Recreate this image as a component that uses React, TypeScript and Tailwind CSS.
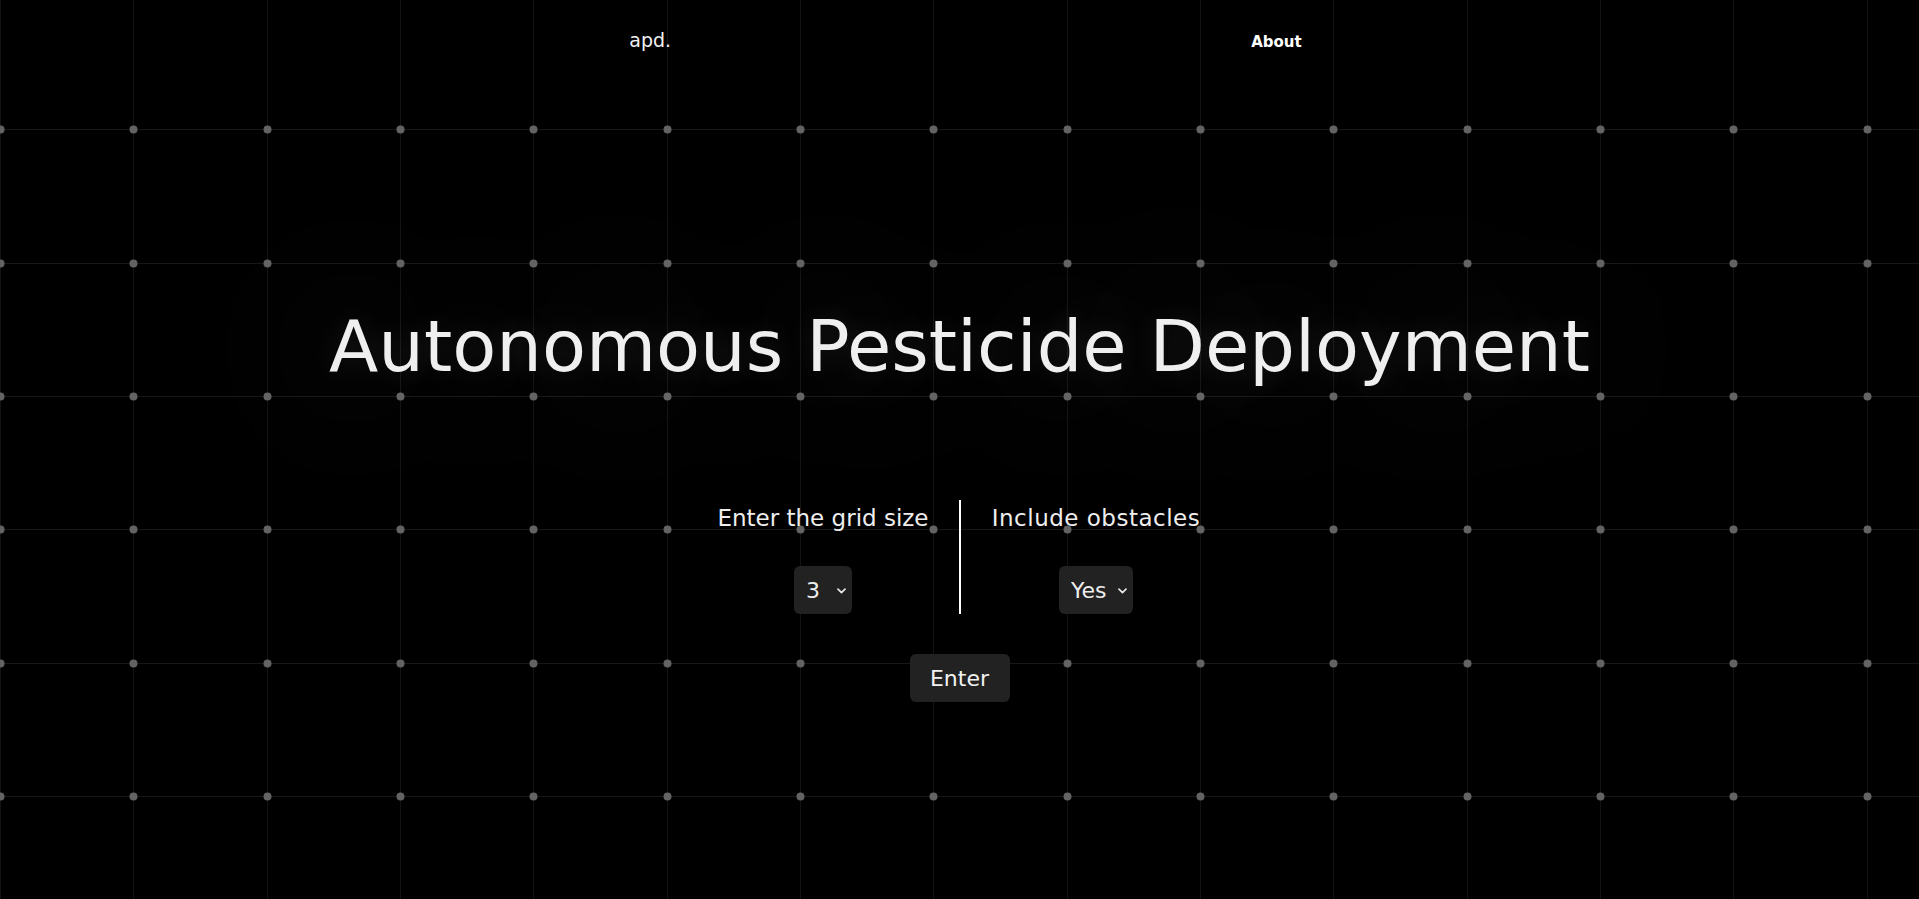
import React from "react";

const STEP = 400 / 3;
const COLS = Array.from({ length: 15 }, (_, i) => i);
const ROWS = Array.from({ length: 7 }, (_, i) => i + 1);

function GridBackground() {
  return (
    <svg
      className="pointer-events-none absolute inset-0 h-full w-full"
      width="1919"
      height="899"
      aria-hidden="true"
    >
      {COLS.map((i) => {
        const x = Math.round(i * STEP) + 0.5;
        return <line key={"v" + i} x1={x} y1={0} x2={x} y2={2000} stroke="#131313" strokeWidth={1} />;
      })}
      {ROWS.map((j) => {
        const y = Math.round(-4 + j * STEP) + 0.5;
        return <line key={"h" + j} x1={0} y1={y} x2={4000} y2={y} stroke="#181818" strokeWidth={1} />;
      })}
      {ROWS.map((j) =>
        COLS.map((i) => (
          <circle
            key={"d" + i + "-" + j}
            cx={Math.round(i * STEP) + 0.5}
            cy={Math.round(-4 + j * STEP) + 0.5}
            r={4}
            fill="#636363"
          />
        ))
      )}
    </svg>
  );
}

function Chevron() {
  return (
    <svg
      className="pointer-events-none absolute right-[6px] top-[22px]"
      width="9"
      height="6"
      viewBox="0 0 9 6"
      aria-hidden="true"
    >
      <path d="M1 1.2 L4.5 4.6 L8 1.2" fill="none" stroke="#e6e6e6" strokeWidth="1.7" strokeLinecap="round" strokeLinejoin="round" />
    </svg>
  );
}

function Select({ width, value, options }: { width: string; value: string; options: string[] }) {
  return (
    <div className={"relative mt-[32px] h-[48px] " + width}>
      <select
        defaultValue={value}
        className="h-full w-full cursor-pointer appearance-none rounded-md bg-[#222222] pl-3 text-[22px] text-[#eeeeee] outline-none"
      >
        {options.map((o) => (
          <option key={o} value={o} className="bg-[#222222]">
            {o}
          </option>
        ))}
      </select>
      <Chevron />
    </div>
  );
}

export default function App() {
  return (
    <div className="relative min-h-screen w-full overflow-hidden bg-black font-['DejaVu_Sans',sans-serif] text-[#eeeeee]">
      <GridBackground />
      <div className="relative">
        <nav className="flex h-[80px] items-start justify-center gap-[580px] pl-[12px]">
          <a className="mt-[31px] text-[19px] leading-none text-[#f2f2f2]">apd.</a>
          <a className="mt-[35px] text-[15px] font-bold leading-none text-white">About</a>
        </nav>

        <main className="flex flex-col items-center">
          <h1 className="mt-[230px] text-[72px] font-normal leading-none text-[#efefef] [text-shadow:0_0_30px_rgba(255,255,255,0.12),0_0_160px_rgba(255,255,255,0.42)]">
            Autonomous Pesticide Deployment
          </h1>

          <div className="mt-[118px] flex items-stretch gap-[31px]">
            <div className="flex w-[209px] flex-col items-center">
              <label className="mt-[2px] whitespace-nowrap text-[23px] leading-8 text-[#eeeeee] [text-shadow:0_0_50px_rgba(150,170,220,0.2)]">
                Enter the grid size
              </label>
              <Select width="w-[58px]" value="3" options={["3", "4", "5", "6", "7", "8", "9", "10"]} />
            </div>
            <div className="w-[2px] bg-white" />
            <div className="flex w-[209px] flex-col items-center">
              <label className="mt-[2px] whitespace-nowrap text-[23px] tracking-[0.5px] leading-8 text-[#eeeeee] [text-shadow:0_0_50px_rgba(150,170,220,0.2)]">
                Include obstacles
              </label>
              <Select width="w-[74px]" value="Yes" options={["Yes", "No"]} />
            </div>
          </div>

          <button className="mt-[40px] h-[48px] w-[100px] rounded-md bg-[#222222] text-[22px] text-[#f2f2f2]">
            Enter
          </button>
        </main>
      </div>
    </div>
  );
}
